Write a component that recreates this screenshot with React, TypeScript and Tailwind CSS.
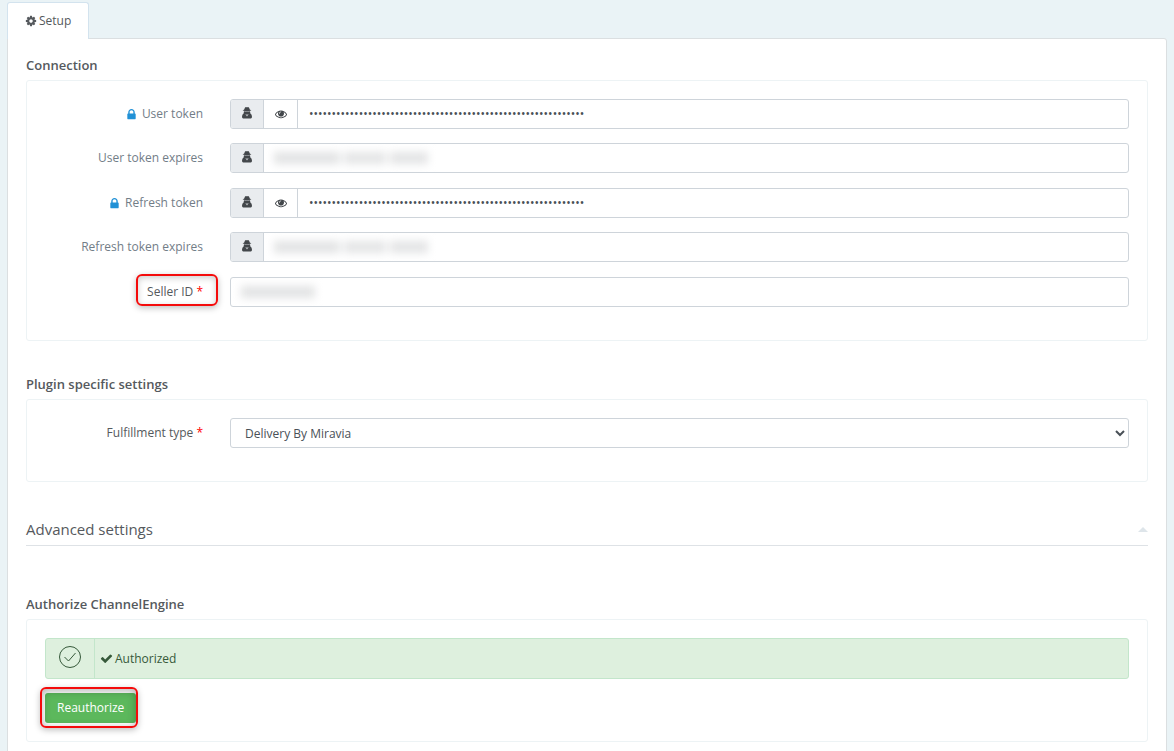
import type { ReactNode } from 'react'

type IconProps = { path: string; className: string }

const icons = {
  cog: 'M1152 896q0-106-75-181t-181-75-181 75-75 181 75 181 181 75 181-75 75-181zm512-109v222q0 12-8 23t-20 13l-185 28q-19 54-39 91 35 50 107 138 10 12 10 25t-9 23q-27 37-99 108t-94 71q-12 0-26-9l-138-108q-44 23-91 38-16 136-29 186-7 28-36 28h-222q-14 0-24.5-8.5t-11.5-21.5l-28-184q-49-16-90-37l-141 107q-10 9-25 9-14 0-25-11-126-114-165-168-7-10-7-23 0-12 8-23 15-21 51-66.5t54-70.5q-27-50-41-99l-183-27q-13-2-21-12.5t-8-23.5v-222q0-12 8-23t19-13l186-28q14-46 39-92-40-57-107-138-10-12-10-24 0-10 9-23 26-36 98.5-107.5t94.5-71.5q13 0 26 10l138 107q44-23 91-38 16-136 29-186 7-28 36-28h222q14 0 24.5 8.5t11.5 21.5l28 184q49 16 90 37l142-107q9-9 24-9 13 0 25 10 129 119 165 170 7 8 7 22 0 12-8 23-15 21-51 66.5t-54 70.5q26 50 41 98l183 28q13 2 21 12.5t8 23.5z',
  lock: 'M640 768h512v-192q0-106-75-181t-181-75-181 75-75 181v192zm832 96v576q0 40-28 68t-68 28h-960q-40 0-68-28t-28-68v-576q0-40 28-68t68-28h32v-192q0-184 132-316t316-132 316 132 132 316v192h32q40 0 68 28t28 68z',
  eye: 'M1664 960q-152-236-381-353 61 104 61 225 0 185-131.5 316.5t-316.5 131.5-316.5-131.5-131.5-316.5q0-121 61-225-229 117-381 353 133 205 333.5 326.5t434.5 121.5 434.5-121.5 333.5-326.5zm-720-384q0-20-14-34t-34-14q-125 0-214.5 89.5t-89.5 214.5q0 20 14 34t34 14 34-14 14-34q0-86 61-147t147-61q20 0 34-14t14-34zm848 384q0 34-20 69-140 230-376.5 368.5t-499.5 138.5-499.5-139-376.5-368q-20-35-20-69t20-69q140-229 376.5-368t499.5-139 499.5 139 376.5 368q20 35 20 69z',
  check: 'M1671 566q0 40-28 68l-724 724-136 136q-28 28-68 28t-68-28l-136-136-362-362q-28-28-28-68t28-68l136-136q28-28 68-28t68 28l294 295 656-657q28-28 68-28t68 28l136 136q28 28 28 68z',
}

function Icon({ path, className }: IconProps) {
  return (
    <svg viewBox="0 0 1792 1792" fill="currentColor" aria-hidden="true" className={className}>
      <path d={path} />
    </svg>
  )
}

function Section({ title, className, children }: { title: string; className: string; children: ReactNode }) {
  return (
    <section>
      <h2 className="text-[13px] font-semibold leading-5 text-[#55595d]">{title}</h2>
      <div className={`mt-[5px] rounded-[3px] border border-[#edf3f5] p-[18px] ${className}`}>{children}</div>
    </section>
  )
}

function Required() {
  return <span className="text-[#f00]">*</span>
}

function FieldRow({ id, label, children }: { id: string; label: ReactNode; children: ReactNode }) {
  return (
    <div className="flex h-[30px] items-center">
      <label htmlFor={id} className="flex w-[185px] shrink-0 items-center justify-end pr-[27px] text-[#727d87]">
        {label}
      </label>
      {children}
    </div>
  )
}

function SecretBadge() {
  return (
    <span className="flex w-[33px] shrink-0 justify-center border-r border-[#ced4da] bg-[#e9ecef] pt-[7px] text-[#43474b]">
      <svg viewBox="0 0 10 12" fill="currentColor" fillRule="evenodd" aria-hidden="true" className="h-3 w-2.5">
        <path d="M3.8 0Q5 .7 6.2 0 7.2.2 7.8 2.6L9.4 3.6Q5 4.8.6 3.6L2.2 2.6Q2.8.2 3.8 0z" />
        <path d="M2 4.2Q5 5 8 4.2L8.4 6.4Q10 7.4 10 9.7 10 11.4 8.8 11.4H1.2Q0 11.4 0 9.7 0 7.4 1.6 6.4zM3.6 6.9l.8 2.6.4-1.7zM6.4 6.9l-1.2.9.4 1.7z" />
      </svg>
    </span>
  )
}

const groupClass = 'flex h-[30px] min-w-0 flex-1 overflow-hidden rounded-[3px] border border-[#ced4da] bg-white'

function TokenField({ id, label }: { id: string; label: string }) {
  return (
    <FieldRow
      id={id}
      label={
        <>
          <Icon path={icons.lock} className="mr-1 h-[13px] w-[13px] text-[#2191d6]" />
          {label}
        </>
      }
    >
      <div className={groupClass}>
        <SecretBadge />
        <button
          type="button"
          aria-label={`Show ${label}`}
          className="flex w-[34px] shrink-0 items-center justify-center border-r border-[#ced4da] text-[#43474b]"
        >
          <Icon path={icons.eye} className="h-3 w-3" />
        </button>
        <input
          id={id}
          type="password"
          defaultValue={'x'.repeat(61)}
          className="min-w-0 flex-1 px-[11px] text-[12px] text-[#495057] outline-none"
        />
      </div>
    </FieldRow>
  )
}

function ExpiresField({ id, label }: { id: string; label: string }) {
  return (
    <FieldRow id={id} label={label}>
      <div className={groupClass}>
        <SecretBadge />
        <div className="relative flex min-w-0 flex-1">
          <input id={id} type="text" readOnly className="min-w-0 flex-1 px-3 outline-none" />
          <span className="pointer-events-none absolute left-2.5 top-2 flex gap-1 blur-[4px]">
            <span className="h-3 w-[66px] bg-[#e2e3e4]" />
            <span className="h-3 w-[42px] bg-[#e4e5e6]" />
            <span className="h-3 w-[38px] bg-[#e3e4e5]" />
          </span>
        </div>
      </div>
    </FieldRow>
  )
}

export default function App() {
  return (
    <div className="min-h-screen bg-[#eaf3f6] px-[7px] pt-0.5 font-['Open_Sans','Liberation_Sans',sans-serif] text-[12px] leading-5 text-[#55595d]">
      <nav className="flex">
        <a
          href="#setup"
          className="relative z-10 -mb-px flex h-[37px] items-center gap-0.5 rounded-t-[3px] border border-b-0 border-[#d3e3ee] bg-white px-[17px]"
        >
          <Icon path={icons.cog} className="h-3 w-3" />
          Setup
        </a>
      </nav>

      <main
        id="setup"
        className="min-h-screen rounded-r-[3px] border border-[#dbdfe1] bg-white px-[18px] pb-10 pt-4"
      >
        <Section title="Connection" className="h-[261px]">
          <div className="flex flex-col gap-[15px]">
            <div className="flex flex-col gap-3.5">
              <TokenField id="user-token" label="User token" />
              <ExpiresField id="user-token-expires" label="User token expires" />
            </div>
            <div className="flex flex-col gap-3.5">
              <TokenField id="refresh-token" label="Refresh token" />
              <ExpiresField id="refresh-token-expires" label="Refresh token expires" />
            </div>
            <div className="relative">
              <FieldRow
                id="seller-id"
                label={
                  <span className="text-[#55595d]">
                    Seller ID <Required />
                  </span>
                }
              >
                <div className={groupClass}>
                  <div className="relative flex min-w-0 flex-1">
                    <input id="seller-id" type="text" className="min-w-0 flex-1 px-3 outline-none" />
                    <span className="pointer-events-none absolute left-2.5 top-2 h-3 w-[74px] bg-[#e2e3e4] blur-[4px]" />
                  </div>
                </div>
              </FieldRow>
              <span className="pointer-events-none absolute -top-[3px] left-[91px] h-8 w-[82px] rounded-md border-2 border-[#f40b0b] shadow-[0_2px_6px_rgba(0,0,0,0.25),inset_0_2px_6px_rgba(0,0,0,0.2)]" />
            </div>
          </div>
        </Section>

        <div className="mt-[33px]">
          <Section title="Plugin specific settings" className="h-[83px]">
            <FieldRow
              id="fulfillment-type"
              label={
                <span className="text-[#55595d]">
                  Fulfillment type <Required />
                </span>
              }
            >
              <select
                id="fulfillment-type"
                className="h-[30px] min-w-0 flex-1 rounded-[3px] border border-[#ced4da] bg-white px-2.5 text-[#495057]"
              >
                <option>Delivery By Miravia</option>
              </select>
            </FieldRow>
          </Section>
        </div>

        <button
          type="button"
          className="mb-[48px] mt-[37px] flex w-full items-center justify-between border-b border-[#dee2e6] pb-[5px] text-[15px] leading-[21px]"
        >
          Advanced settings
          <svg viewBox="0 0 10 5" fill="#dee5ea" aria-hidden="true" className="h-[5px] w-2.5">
            <path d="M0 5 5 0l5 5z" />
          </svg>
        </button>

        <Section title="Authorize ChannelEngine" className="h-[123px]">
          <div className="flex h-[41px] rounded-[3px] border border-[#c3e6cb] bg-[#def0de] text-[#36593a]">
            <span className="flex w-[49px] items-center justify-center border-r border-[#c3e6cb]">
              <svg viewBox="0 0 24 24" fill="none" stroke="currentColor" aria-hidden="true" className="mb-1 h-6 w-6">
                <circle cx="12" cy="12" r="10.5" />
                <path d="m6.5 12 4 4 7-8" />
              </svg>
            </span>
            <span className="flex items-center gap-0.5 px-[5px]">
              <Icon path={icons.check} className="h-[13px] w-[13px]" />
              Authorized
            </span>
          </div>
          <div className="relative mt-3.5 flex">
            <button type="button" className="h-[30px] rounded-[3px] bg-[#5cb85c] px-3 text-white">
              Reauthorize
            </button>
            <span className="pointer-events-none absolute -left-[5px] -top-1.5 h-[41px] w-[98px] rounded-md border-2 border-[#f40b0b] shadow-[0_2px_6px_rgba(0,0,0,0.25),inset_0_2px_8px_rgba(0,0,0,0.3)]" />
          </div>
        </Section>
      </main>
    </div>
  )
}
